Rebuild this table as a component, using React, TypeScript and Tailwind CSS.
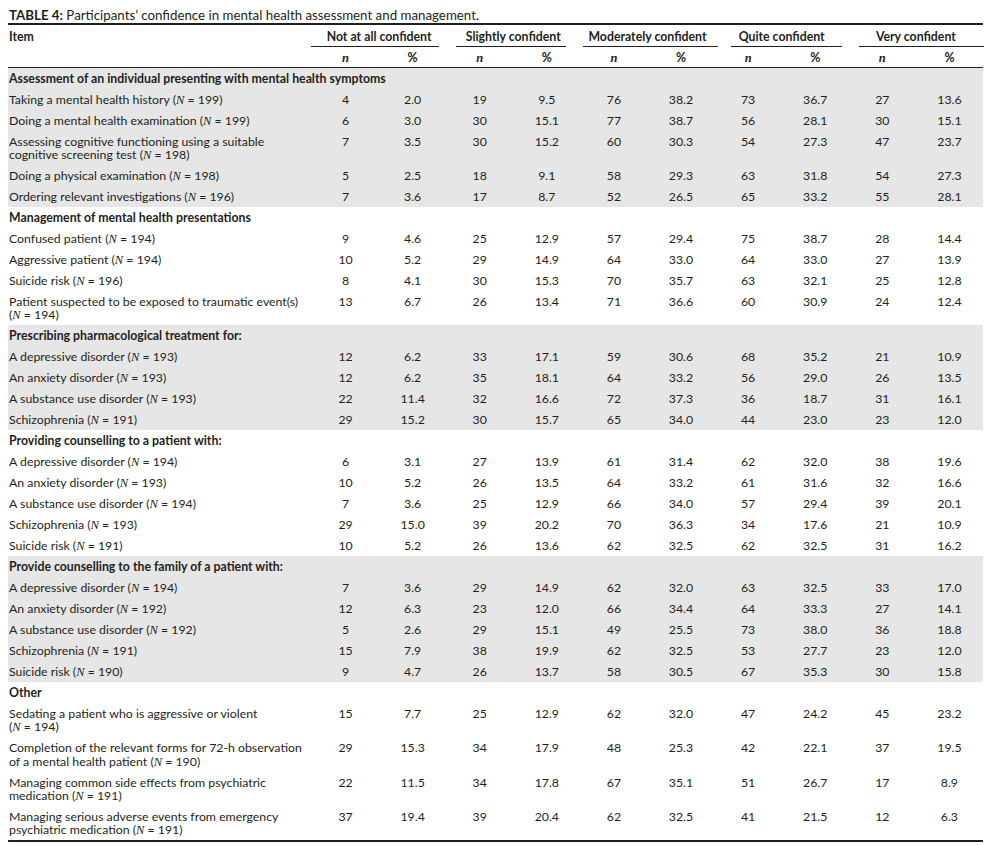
import React from "react";

type Row = { label: React.ReactNode; vals: string[]; double?: boolean };
type Section = { title: string; gray: boolean; rows: Row[] };

const N = ({ v }: { v: string }) => (
  <>
    (<i className="font-['Liberation_Serif',serif] text-[12.5px] leading-[0]">N</i> = {v})
  </>
);

const r = (text: string, n: string, vals: string): Row => ({
  label: (
    <>
      {text} <N v={n} />
    </>
  ),
  vals: vals.split(" "),
});

const r2 = (line1: string, line2: string, n: string, vals: string): Row => ({
  label: (
    <>
      {line1}
      <br />
      {line2 ? line2 + " " : ""}
      <N v={n} />
    </>
  ),
  vals: vals.split(" "),
  double: true,
});

const sections: Section[] = [
  {
    title: "Assessment of an individual presenting with mental health symptoms",
    gray: true,
    rows: [
      r("Taking a mental health history", "199", "4 2.0 19 9.5 76 38.2 73 36.7 27 13.6"),
      r("Doing a mental health examination", "199", "6 3.0 30 15.1 77 38.7 56 28.1 30 15.1"),
      r2("Assessing cognitive functioning using a suitable", "cognitive screening test", "198", "7 3.5 30 15.2 60 30.3 54 27.3 47 23.7"),
      r("Doing a physical examination", "198", "5 2.5 18 9.1 58 29.3 63 31.8 54 27.3"),
      r("Ordering relevant investigations", "196", "7 3.6 17 8.7 52 26.5 65 33.2 55 28.1"),
    ],
  },
  {
    title: "Management of mental health presentations",
    gray: false,
    rows: [
      r("Confused patient", "194", "9 4.6 25 12.9 57 29.4 75 38.7 28 14.4"),
      r("Aggressive patient", "194", "10 5.2 29 14.9 64 33.0 64 33.0 27 13.9"),
      r("Suicide risk", "196", "8 4.1 30 15.3 70 35.7 63 32.1 25 12.8"),
      r2("Patient suspected to be exposed to traumatic event(s)", "", "194", "13 6.7 26 13.4 71 36.6 60 30.9 24 12.4"),
    ],
  },
  {
    title: "Prescribing pharmacological treatment for:",
    gray: true,
    rows: [
      r("A depressive disorder", "193", "12 6.2 33 17.1 59 30.6 68 35.2 21 10.9"),
      r("An anxiety disorder", "193", "12 6.2 35 18.1 64 33.2 56 29.0 26 13.5"),
      r("A substance use disorder", "193", "22 11.4 32 16.6 72 37.3 36 18.7 31 16.1"),
      r("Schizophrenia", "191", "29 15.2 30 15.7 65 34.0 44 23.0 23 12.0"),
    ],
  },
  {
    title: "Providing counselling to a patient with:",
    gray: false,
    rows: [
      r("A depressive disorder", "194", "6 3.1 27 13.9 61 31.4 62 32.0 38 19.6"),
      r("An anxiety disorder", "193", "10 5.2 26 13.5 64 33.2 61 31.6 32 16.6"),
      r("A substance use disorder", "194", "7 3.6 25 12.9 66 34.0 57 29.4 39 20.1"),
      r("Schizophrenia", "193", "29 15.0 39 20.2 70 36.3 34 17.6 21 10.9"),
      r("Suicide risk", "191", "10 5.2 26 13.6 62 32.5 62 32.5 31 16.2"),
    ],
  },
  {
    title: "Provide counselling to the family of a patient with:",
    gray: true,
    rows: [
      r("A depressive disorder", "194", "7 3.6 29 14.9 62 32.0 63 32.5 33 17.0"),
      r("An anxiety disorder", "192", "12 6.3 23 12.0 66 34.4 64 33.3 27 14.1"),
      r("A substance use disorder", "192", "5 2.6 29 15.1 49 25.5 73 38.0 36 18.8"),
      r("Schizophrenia", "191", "15 7.9 38 19.9 62 32.5 53 27.7 23 12.0"),
      r("Suicide risk", "190", "9 4.7 26 13.7 58 30.5 67 35.3 30 15.8"),
    ],
  },
  {
    title: "Other",
    gray: false,
    rows: [
      r2("Sedating a patient who is aggressive or violent", "", "194", "15 7.7 25 12.9 62 32.0 47 24.2 45 23.2"),
      r2("Completion of the relevant forms for 72-h observation", "of a mental health patient", "190", "29 15.3 34 17.9 48 25.3 42 22.1 37 19.5"),
      r2("Managing common side effects from psychiatric", "medication", "191", "22 11.5 34 17.8 67 35.1 51 26.7 17 8.9"),
      r2("Managing serious adverse events from emergency", "psychiatric medication", "191", "37 19.4 39 20.4 62 32.5 41 21.5 12 6.3"),
    ],
  },
];

const groups: { name: string; line: string }[] = [
  { name: "Not at all confident", line: "ml-[-1px] mr-[7px]" },
  { name: "Slightly confident", line: "ml-[10px] mr-[14px]" },
  { name: "Moderately confident", line: "ml-[3px] mr-[-3px]" },
  { name: "Quite confident", line: "ml-[16px] mr-[7px]" },
  { name: "Very confident", line: "ml-[10px] mr-[-1px]" },
];

export default function App() {
  return (
    <div className="bg-white w-[988px] h-[845px] pl-2 text-[#231f20] font-['Lato','Liberation_Sans',sans-serif] text-[12.3px]">
      <div className="w-[975px] pt-[8px] pb-[0px] border-b-2 border-[#231f20] text-[13.3px] leading-[15px] pl-[1px]">
        <span className="font-bold">TABLE 4:</span> Participants’ confidence in mental health assessment and management.
      </div>
      <table className="w-[975px] table-fixed border-collapse">
        <colgroup>
          <col className="w-[304px]" />
          {Array.from({ length: 10 }).map((_, i) => (
            <col key={i} />
          ))}
        </colgroup>
        <thead>
          <tr>
            <th className="text-left font-bold pl-[1px] pt-[5px] h-[21px] align-top leading-[14px]">Item</th>
            {groups.map((g) => (
              <th key={g.name} colSpan={2} className="font-bold pt-[5px] align-top leading-[14px] p-0">
                <div className="pb-[2px] whitespace-nowrap">{g.name}</div>
                <div className={`border-b border-[#231f20] ${g.line}`} />
              </th>
            ))}
          </tr>
          <tr className="border-b border-[#231f20]">
            <th className="h-[20px]" />
            {groups.map((g) => (
              <React.Fragment key={g.name}>
                <th className="font-bold italic font-['Liberation_Serif',serif] text-[12.5px] leading-[14px] pt-[4px] pb-[2px] align-top">n</th>
                <th className="font-bold leading-[14px] pt-[4px] pb-[2px] align-top">%</th>
              </React.Fragment>
            ))}
          </tr>
        </thead>
        {sections.map((s) => (
          <tbody key={s.title} className={s.gray ? "bg-[#e6e6e6]" : "bg-white"}>
            <tr>
              <td colSpan={11} className="font-bold pl-[1px] pt-[3.85px] pb-[3.85px] leading-[13.3px] whitespace-nowrap">
                {s.title}
              </td>
            </tr>
            {s.rows.map((row, i) => (
              <tr key={i}>
                <td className="pl-[1px] pt-[3.85px] pb-[3.85px] leading-[13.3px] align-top whitespace-nowrap">{row.label}</td>
                {row.vals.map((v, j) => (
                  <td key={j} className="text-center pt-[3.85px] pb-[3.85px] leading-[13.3px] align-top">
                    {v}
                  </td>
                ))}
              </tr>
            ))}
          </tbody>
        ))}
      </table>
      <div className="w-[975px] border-t-2 border-[#231f20]" />
    </div>
  );
}
